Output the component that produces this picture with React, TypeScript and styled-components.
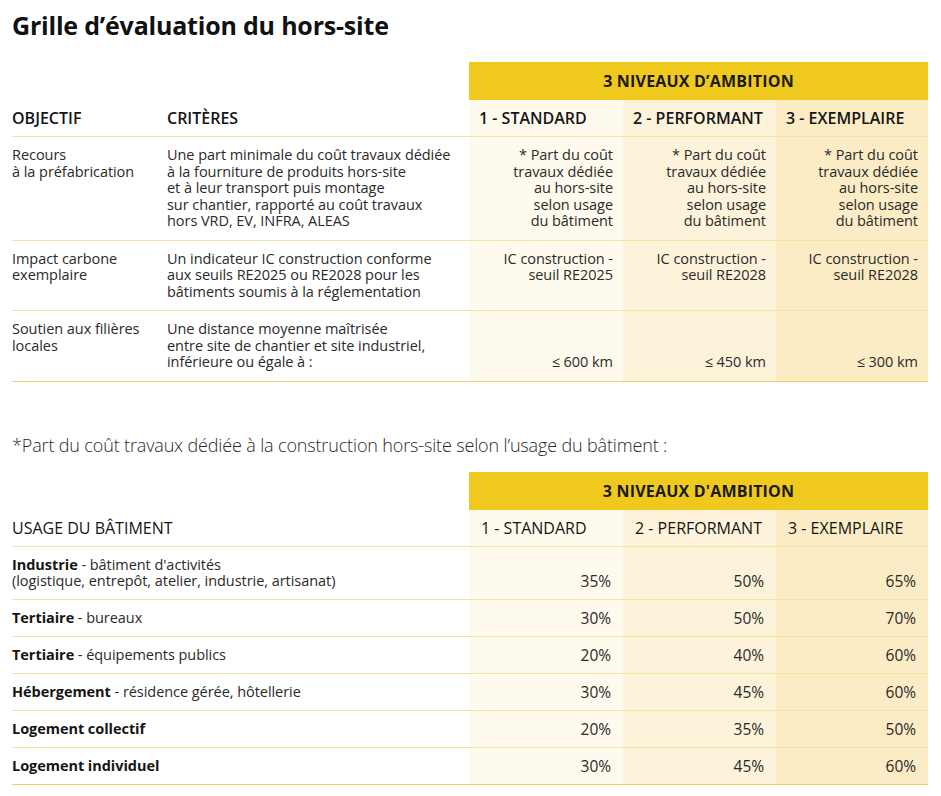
import React from "react";
import styled, { createGlobalStyle, css } from "styled-components";

const Global = createGlobalStyle`
  html, body { margin: 0; padding: 0; background: #ffffff; }
  body { font-family: "Open Sans", "Liberation Sans", sans-serif; color: #2a2a2a; }
`;

type Tone = 1 | 2 | 3;
const toneBg: Record<Tone, string> = {
  1: "#fefaee",
  2: "#fcf3da",
  3: "#fbecc6",
};

const Page = styled.div`
  width: 941px;
  padding: 8px 0 0 12px;
  box-sizing: border-box;
`;

const Title = styled.h1`
  margin: 0;
  font-size: 25px;
  line-height: 34px;
  font-weight: 700;
  letter-spacing: -0.2px;
  color: #111;
`;

const Grid = styled.div<{ $cols: string }>`
  display: grid;
  grid-template-columns: ${(p) => p.$cols};
  width: 916px;
`;

const Table1 = styled(Grid)`
  margin-top: 20px;
`;

const Table2 = styled(Grid)`
  margin-top: 16px;
`;

const Blank = styled.div<{ $span: number }>`
  grid-column: span ${(p) => p.$span};
`;

const Band = styled.div`
  grid-column: span 3;
  height: 38px;
  background: #f0c91f;
  display: flex;
  align-items: center;
  justify-content: center;
  font-size: 16px;
  font-weight: 700;
  color: #1a1a1a;
  letter-spacing: 0.2px;
`;

const line = css`
  border-bottom: 1px solid #f5e2a0;
`;

const HeadCell = styled.div<{ $tone?: Tone; $weight: number; $inset: number }>`
  ${line};
  height: 37px;
  box-sizing: border-box;
  display: flex;
  align-items: center;
  padding-left: ${(p) => (p.$tone ? `${p.$inset}px` : "0")};
  background: ${(p) => (p.$tone ? toneBg[p.$tone] : "transparent")};
  font-size: 16px;
  font-weight: ${(p) => p.$weight};
  color: #151515;
  white-space: nowrap;
`;

const TextCell = styled.div<{ $last?: boolean; $compact?: boolean }>`
  ${line};
  ${(p) => p.$last && "border-bottom-color: #f1d168;"}
  padding: ${(p) => (p.$compact ? "10px 8px 10px 0" : "10px 8px 10px 0")};
  font-size: 14.5px;
  line-height: ${(p) => (p.$compact ? "16px" : "16.5px")};
  font-weight: 400;
  color: #2a2a2a;
  letter-spacing: -0.05px;
`;

const ValueCell = styled.div<{
  $tone: Tone;
  $bottom?: boolean;
  $last?: boolean;
  $compact?: boolean;
}>`
  ${line};
  ${(p) => p.$last && "border-bottom-color: #f1d168;"}
  background: ${(p) => toneBg[p.$tone]};
  padding: ${(p) => (p.$compact ? "10px 12px 10px 8px" : "10px 10px 10px 8px")};
  font-size: ${(p) => (p.$compact ? "15.5px" : "14.5px")};
  line-height: ${(p) => (p.$compact ? "16px" : "16.5px")};
  color: #2a2a2a;
  letter-spacing: -0.05px;
  text-align: right;
  display: flex;
  flex-direction: column;
  justify-content: ${(p) => (p.$bottom ? "flex-end" : "flex-start")};
`;

const Note = styled.p`
  margin: 52px 0 0 0;
  font-size: 18px;
  line-height: 22px;
  font-weight: 300;
  color: #2a2a2a;
  letter-spacing: -0.15px;
`;

const Strong = styled.span`
  font-weight: 700;
  color: #151515;
`;

const levels = ["1 - STANDARD", "2 - PERFORMANT", "3 - EXEMPLAIRE"];

const rows1: { obj: string[]; crit: string[]; vals: string[][]; bottom?: boolean }[] = [
  {
    obj: ["Recours", "à la préfabrication"],
    crit: [
      "Une part minimale du coût travaux dédiée",
      "à la fourniture de produits hors-site",
      "et à leur transport puis montage",
      "sur chantier, rapporté au coût travaux",
      "hors VRD, EV, INFRA, ALEAS",
    ],
    vals: [0, 1, 2].map(() => [
      "* Part du coût",
      "travaux dédiée",
      "au hors-site",
      "selon usage",
      "du bâtiment",
    ]),
  },
  {
    obj: ["Impact carbone", "exemplaire"],
    crit: [
      "Un indicateur IC construction conforme",
      "aux seuils RE2025 ou RE2028 pour les",
      "bâtiments soumis à la réglementation",
    ],
    vals: [
      ["IC construction -", "seuil RE2025"],
      ["IC construction -", "seuil RE2028"],
      ["IC construction -", "seuil RE2028"],
    ],
  },
  {
    obj: ["Soutien aux filières", "locales"],
    crit: [
      "Une distance moyenne maîtrisée",
      "entre site de chantier et site industriel,",
      "inférieure ou égale à :",
    ],
    vals: [["≤ 600 km"], ["≤ 450 km"], ["≤ 300 km"]],
    bottom: true,
  },
];

const rows2: { bold: string; rest?: string[]; vals: string[] }[] = [
  {
    bold: "Industrie",
    rest: [" - bâtiment d'activités", "(logistique, entrepôt, atelier, industrie, artisanat)"],
    vals: ["35%", "50%", "65%"],
  },
  { bold: "Tertiaire", rest: [" - bureaux"], vals: ["30%", "50%", "70%"] },
  { bold: "Tertiaire", rest: [" - équipements publics"], vals: ["20%", "40%", "60%"] },
  { bold: "Hébergement", rest: [" - résidence gérée, hôtellerie"], vals: ["30%", "45%", "60%"] },
  { bold: "Logement collectif", vals: ["20%", "35%", "50%"] },
  { bold: "Logement individuel", vals: ["30%", "45%", "60%"] },
];

const Lines = ({ items }: { items: string[] }) => (
  <>
    {items.map((t, i) => (
      <div key={i}>{t}</div>
    ))}
  </>
);

export default function App() {
  return (
    <Page>
      <Global />
      <Title>Grille d’évaluation du hors-site</Title>

      <Table1 $cols="155px 302px 154px 153px 152px">
        <Blank $span={2} />
        <Band>3 NIVEAUX D’AMBITION</Band>
        <HeadCell $weight={600} $inset={10}>OBJECTIF</HeadCell>
        <HeadCell $weight={600} $inset={10}>CRITÈRES</HeadCell>
        {levels.map((l, i) => (
          <HeadCell key={l} $weight={600} $inset={10} $tone={(i + 1) as Tone}>
            {l}
          </HeadCell>
        ))}
        {rows1.map((r, ri) => {
          const last = ri === rows1.length - 1;
          return (
            <React.Fragment key={ri}>
              <TextCell $last={last}>
                <Lines items={r.obj} />
              </TextCell>
              <TextCell $last={last}>
                <Lines items={r.crit} />
              </TextCell>
              {r.vals.map((v, vi) => (
                <ValueCell key={vi} $tone={(vi + 1) as Tone} $bottom={r.bottom} $last={last}>
                  <Lines items={v} />
                </ValueCell>
              ))}
            </React.Fragment>
          );
        })}
      </Table1>

      <Note>*Part du coût travaux dédiée à la construction hors-site selon l’usage du bâtiment :</Note>

      <Table2 $cols="457px 154px 153px 152px">
        <Blank $span={1} />
        <Band>3 NIVEAUX D'AMBITION</Band>
        <HeadCell $weight={500} $inset={12}>USAGE DU BÂTIMENT</HeadCell>
        {levels.map((l, i) => (
          <HeadCell key={l} $weight={500} $inset={12} $tone={(i + 1) as Tone}>
            {l}
          </HeadCell>
        ))}
        {rows2.map((r, ri) => {
          const last = ri === rows2.length - 1;
          return (
            <React.Fragment key={ri}>
              <TextCell $last={last} $compact>
                <div>
                  <Strong>{r.bold}</Strong>
                  {r.rest ? r.rest[0] : null}
                </div>
                {r.rest && r.rest[1] ? <div>{r.rest[1]}</div> : null}
              </TextCell>
              {r.vals.map((v, vi) => (
                <ValueCell key={vi} $tone={(vi + 1) as Tone} $bottom $last={last} $compact>
                  <div>{v}</div>
                </ValueCell>
              ))}
            </React.Fragment>
          );
        })}
      </Table2>
    </Page>
  );
}
